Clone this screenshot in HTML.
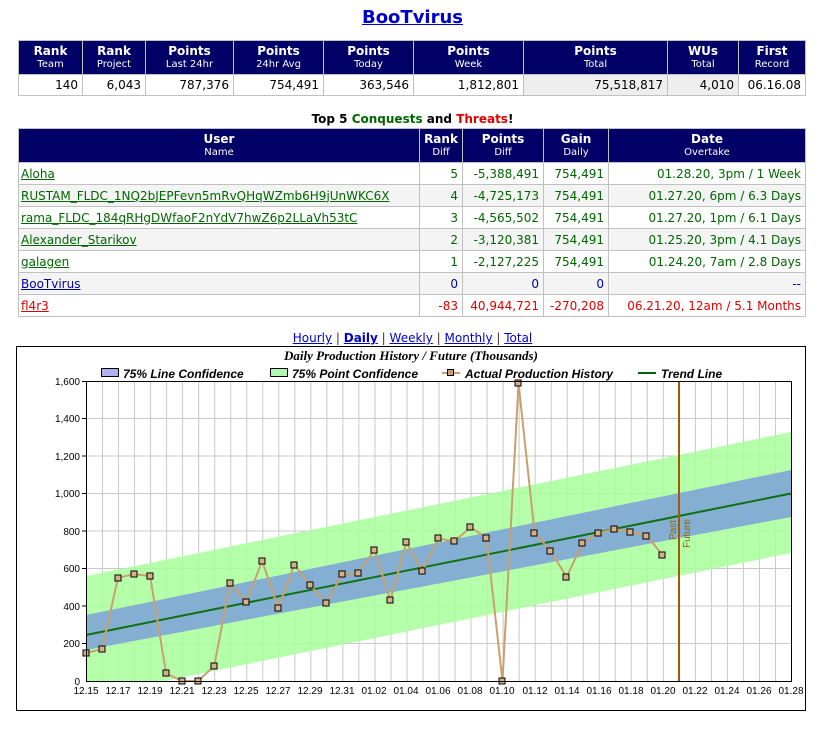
<!DOCTYPE html>
<html><head><meta charset="utf-8"><style>
body{margin:0;background:#fff;font-family:"DejaVu Sans","Liberation Sans",sans-serif;}
.abs{position:absolute}
table{border-collapse:collapse;position:absolute;table-layout:fixed}
td{border:1px solid #c0c0c0;padding:0 4px;font-size:12px;white-space:nowrap;overflow:hidden}
th{background:#000066;color:#fff;border:1px solid #c0c0c0;font-size:12px;line-height:13px;padding:2px 0 1px;font-weight:bold}
th small{font-size:10px;font-weight:normal;display:block}
.r{text-align:right}
.g td{color:#006600}
.g a{color:#006600}
a{text-decoration:underline}
</style></head><body>
<div class="abs" style="left:0;width:825px;top:7px;text-align:center;font-size:18px;font-weight:bold"><a style="color:#0000cc">BooTvirus</a></div>
<table style="left:18px;top:40px;width:787px">
<colgroup><col style="width:64px"><col style="width:63px"><col style="width:88px"><col style="width:90px"><col style="width:90px"><col style="width:110px"><col style="width:144px"><col style="width:71px"><col style="width:67px"></colgroup>
<tr style="height:34px"><th>Rank<small>Team</small></th><th>Rank<small>Project</small></th><th>Points<small>Last 24hr</small></th><th>Points<small>24hr Avg</small></th><th>Points<small>Today</small></th><th>Points<small>Week</small></th><th>Points<small>Total</small></th><th>WUs<small>Total</small></th><th>First<small>Record</small></th></tr>
<tr style="height:21px"><td class="r">140</td><td class="r">6,043</td><td class="r">787,376</td><td class="r">754,491</td><td class="r">363,546</td><td class="r">1,812,801</td><td class="r" style="background:#eee">75,518,817</td><td class="r" style="background:#eee">4,010</td><td class="r">06.16.08</td></tr>
</table>
<div class="abs" style="left:0;width:825px;top:112px;text-align:center;font-size:12px;font-weight:bold">Top 5 <span style="color:#006600">Conquests</span> and <span style="color:#e00000">Threats</span>!</div>
<table style="left:18px;top:128px;width:787px">
<colgroup><col style="width:401px"><col style="width:43px"><col style="width:81px"><col style="width:65px"><col style="width:197px"></colgroup>
<tr style="height:34px"><th>User<small>Name</small></th><th>Rank<small>Diff</small></th><th>Points<small>Diff</small></th><th>Gain<small>Daily</small></th><th>Date<small>Overtake</small></th></tr>
<tr class="g" style="height:22px"><td style="padding-left:2px"><a>Aloha</a></td><td class="r">5</td><td class="r">-5,388,491</td><td class="r">754,491</td><td class="r">01.28.20, 3pm / 1 Week</td></tr>
<tr class="g" style="height:22px;background:#f4f4f4"><td style="padding-left:2px"><a>RUSTAM_FLDC_1NQ2bJEPFevn5mRvQHqWZmb6H9jUnWKC6X</a></td><td class="r">4</td><td class="r">-4,725,173</td><td class="r">754,491</td><td class="r">01.27.20, 6pm / 6.3 Days</td></tr>
<tr class="g" style="height:22px"><td style="padding-left:2px"><a>rama_FLDC_184qRHgDWfaoF2nYdV7hwZ6p2LLaVh53tC</a></td><td class="r">3</td><td class="r">-4,565,502</td><td class="r">754,491</td><td class="r">01.27.20, 1pm / 6.1 Days</td></tr>
<tr class="g" style="height:22px;background:#f4f4f4"><td style="padding-left:2px"><a>Alexander_Starikov</a></td><td class="r">2</td><td class="r">-3,120,381</td><td class="r">754,491</td><td class="r">01.25.20, 3pm / 4.1 Days</td></tr>
<tr class="g" style="height:22px"><td style="padding-left:2px"><a>galagen</a></td><td class="r">1</td><td class="r">-2,127,225</td><td class="r">754,491</td><td class="r">01.24.20, 7am / 2.8 Days</td></tr>
<tr style="height:22px;background:#f4f4f4;color:#0000aa"><td style="padding-left:2px"><a style="color:#0000aa">BooTvirus</a></td><td class="r">0</td><td class="r">0</td><td class="r">0</td><td class="r">--</td></tr>
<tr style="height:22px;color:#e00000"><td style="padding-left:2px"><a style="color:#e00000">fl4r3</a></td><td class="r">-83</td><td class="r">40,944,721</td><td class="r">-270,208</td><td class="r">06.21.20, 12am / 5.1 Months</td></tr>
</table>
<div class="abs" style="left:0;width:825px;top:331px;text-align:center;font-size:12px;color:#333"><a style="color:#0000cc">Hourly</a> | <a style="color:#0000cc;font-weight:bold">Daily</a> | <a style="color:#0000cc">Weekly</a> | <a style="color:#0000cc">Monthly</a> | <a style="color:#0000cc">Total</a></div>
<svg class="abs" style="left:0;top:0" width="825" height="732" font-family="Liberation Sans,Arial,sans-serif">
<defs><pattern id="vg" x="86" y="0" width="16.023" height="10" patternUnits="userSpaceOnUse"><rect x="0" y="0" width="1" height="10" fill="#c8c8c8"/></pattern>
<clipPath id="pc"><rect x="86" y="381" width="705" height="300"/></clipPath></defs>
<rect x="16.5" y="346.5" width="789" height="364" fill="#fff" stroke="#000"/>
<text x="411" y="360" text-anchor="middle" font-family="Liberation Serif,serif" font-style="italic" font-weight="bold" font-size="13">Daily Production History / Future (Thousands)</text>
<g font-size="12" font-style="italic" font-weight="bold">
<rect x="101.5" y="368.5" width="17" height="8" fill="#b0b0f0" stroke="#000"/><text x="123" y="378">75% Line Confidence</text>
<rect x="270.5" y="368.5" width="17" height="8" fill="#b0f7b0" stroke="#000"/><text x="292" y="378">75% Point Confidence</text>
<line x1="442" y1="373" x2="460" y2="373" stroke="#c8a070" stroke-width="2"/><rect x="447.5" y="369.5" width="6" height="6" fill="#c8a070" stroke="#000"/><text x="465" y="378">Actual Production History</text>
<line x1="638" y1="373" x2="656" y2="373" stroke="#006600" stroke-width="2"/><text x="661" y="378">Trend Line</text>
</g>
<rect x="86" y="381" width="705" height="300" fill="url(#vg)"/>
<g stroke="#c8c8c8"><line x1="86" x2="791" y1="418.5" y2="418.5"/><line x1="86" x2="791" y1="456" y2="456"/><line x1="86" x2="791" y1="493.5" y2="493.5"/><line x1="86" x2="791" y1="531" y2="531"/><line x1="86" x2="791" y1="568.5" y2="568.5"/><line x1="86" x2="791" y1="606" y2="606"/><line x1="86" x2="791" y1="643.5" y2="643.5"/></g>
<g clip-path="url(#pc)">
<polygon points="86,576 791,432 791,553 86,697" fill="#a8ff9c" opacity="0.85"/>
<polygon points="86,615 791,470 791,517 86,650" fill="#7fa6d6" opacity="0.9"/>
</g>
<line x1="86" y1="635" x2="791" y2="493.5" stroke="#107010" stroke-width="2"/>
<line x1="679" y1="381" x2="679" y2="681" stroke="#a05a00" stroke-width="2"/>
<text transform="translate(676,540) rotate(-90)" font-size="10" fill="#8a6a00">Past</text>
<text transform="translate(690,548) rotate(-90)" font-size="10" fill="#8a6a00">Future</text>
<polyline fill="none" stroke="#c8a070" stroke-width="2" points="86,652.9 102,649.1 118,577.9 134,574.1 150.1,576 166.1,673.5 182.1,681 198.1,681 214.2,666 230.2,582.6 246.2,602.3 262.2,561 278.2,607.9 294.3,564.8 310.3,585.4 326.3,603.2 342.3,574.1 358.3,573.2 374.4,549.8 390.4,600.4 406.4,542.3 422.4,571.3 438.4,538.5 454.5,541.3 470.5,527.3 486.5,537.6 502.5,681 518.5,382.9 534.6,532.9 550.6,550.7 566.6,576.9 582.6,543.2 598.6,532.9 614.7,529.1 630.7,531.9 646.7,535.7 662.7,555.4"/>
<g fill="#d8b088" stroke="#000" stroke-width="1">
<rect x="83" y="650" width="6" height="6"/><rect x="99" y="646" width="6" height="6"/><rect x="115" y="575" width="6" height="6"/><rect x="131" y="571" width="6" height="6"/><rect x="147" y="573" width="6" height="6"/><rect x="163" y="670" width="6" height="6"/><rect x="179" y="678" width="6" height="6"/><rect x="195" y="678" width="6" height="6"/><rect x="211" y="663" width="6" height="6"/><rect x="227" y="580" width="6" height="6"/><rect x="243" y="599" width="6" height="6"/><rect x="259" y="558" width="6" height="6"/><rect x="275" y="605" width="6" height="6"/><rect x="291" y="562" width="6" height="6"/><rect x="307" y="582" width="6" height="6"/><rect x="323" y="600" width="6" height="6"/><rect x="339" y="571" width="6" height="6"/><rect x="355" y="570" width="6" height="6"/><rect x="371" y="547" width="6" height="6"/><rect x="387" y="597" width="6" height="6"/><rect x="403" y="539" width="6" height="6"/><rect x="419" y="568" width="6" height="6"/><rect x="435" y="535" width="6" height="6"/><rect x="451" y="538" width="6" height="6"/><rect x="467" y="524" width="6" height="6"/><rect x="483" y="535" width="6" height="6"/><rect x="499" y="678" width="6" height="6"/><rect x="515" y="380" width="6" height="6"/><rect x="531" y="530" width="6" height="6"/><rect x="547" y="548" width="6" height="6"/><rect x="563" y="574" width="6" height="6"/><rect x="579" y="540" width="6" height="6"/><rect x="595" y="530" width="6" height="6"/><rect x="611" y="526" width="6" height="6"/><rect x="627" y="529" width="6" height="6"/><rect x="643" y="533" width="6" height="6"/><rect x="659" y="552" width="6" height="6"/>
</g>
<rect x="86.5" y="381.5" width="705" height="300" fill="none" stroke="#000"/>
<g font-size="10" text-anchor="end">
<text x="80" y="385">1,600</text><text x="80" y="422">1,400</text><text x="80" y="460">1,200</text><text x="80" y="497">1,000</text><text x="80" y="535">800</text><text x="80" y="572">600</text><text x="80" y="610">400</text><text x="80" y="647">200</text><text x="80" y="685">0</text>
</g>
<g stroke="#000"><line x1="82" x2="86" y1="381.5" y2="381.5"/><line x1="82" x2="86" y1="418.5" y2="418.5"/><line x1="82" x2="86" y1="456" y2="456"/><line x1="82" x2="86" y1="493.5" y2="493.5"/><line x1="82" x2="86" y1="531" y2="531"/><line x1="82" x2="86" y1="568.5" y2="568.5"/><line x1="82" x2="86" y1="606" y2="606"/><line x1="82" x2="86" y1="643.5" y2="643.5"/></g>
<g font-size="10" text-anchor="middle">
<text x="86" y="694">12.15</text><text x="118" y="694">12.17</text><text x="150" y="694">12.19</text><text x="182" y="694">12.21</text><text x="214" y="694">12.23</text><text x="246" y="694">12.25</text><text x="278" y="694">12.27</text><text x="310" y="694">12.29</text><text x="342" y="694">12.31</text><text x="374" y="694">01.02</text><text x="406" y="694">01.04</text><text x="438" y="694">01.06</text><text x="470" y="694">01.08</text><text x="502" y="694">01.10</text><text x="535" y="694">01.12</text><text x="567" y="694">01.14</text><text x="599" y="694">01.16</text><text x="631" y="694">01.18</text><text x="663" y="694">01.20</text><text x="695" y="694">01.22</text><text x="727" y="694">01.24</text><text x="759" y="694">01.26</text><text x="791" y="694">01.28</text>
</g>
</svg>
</body></html>
